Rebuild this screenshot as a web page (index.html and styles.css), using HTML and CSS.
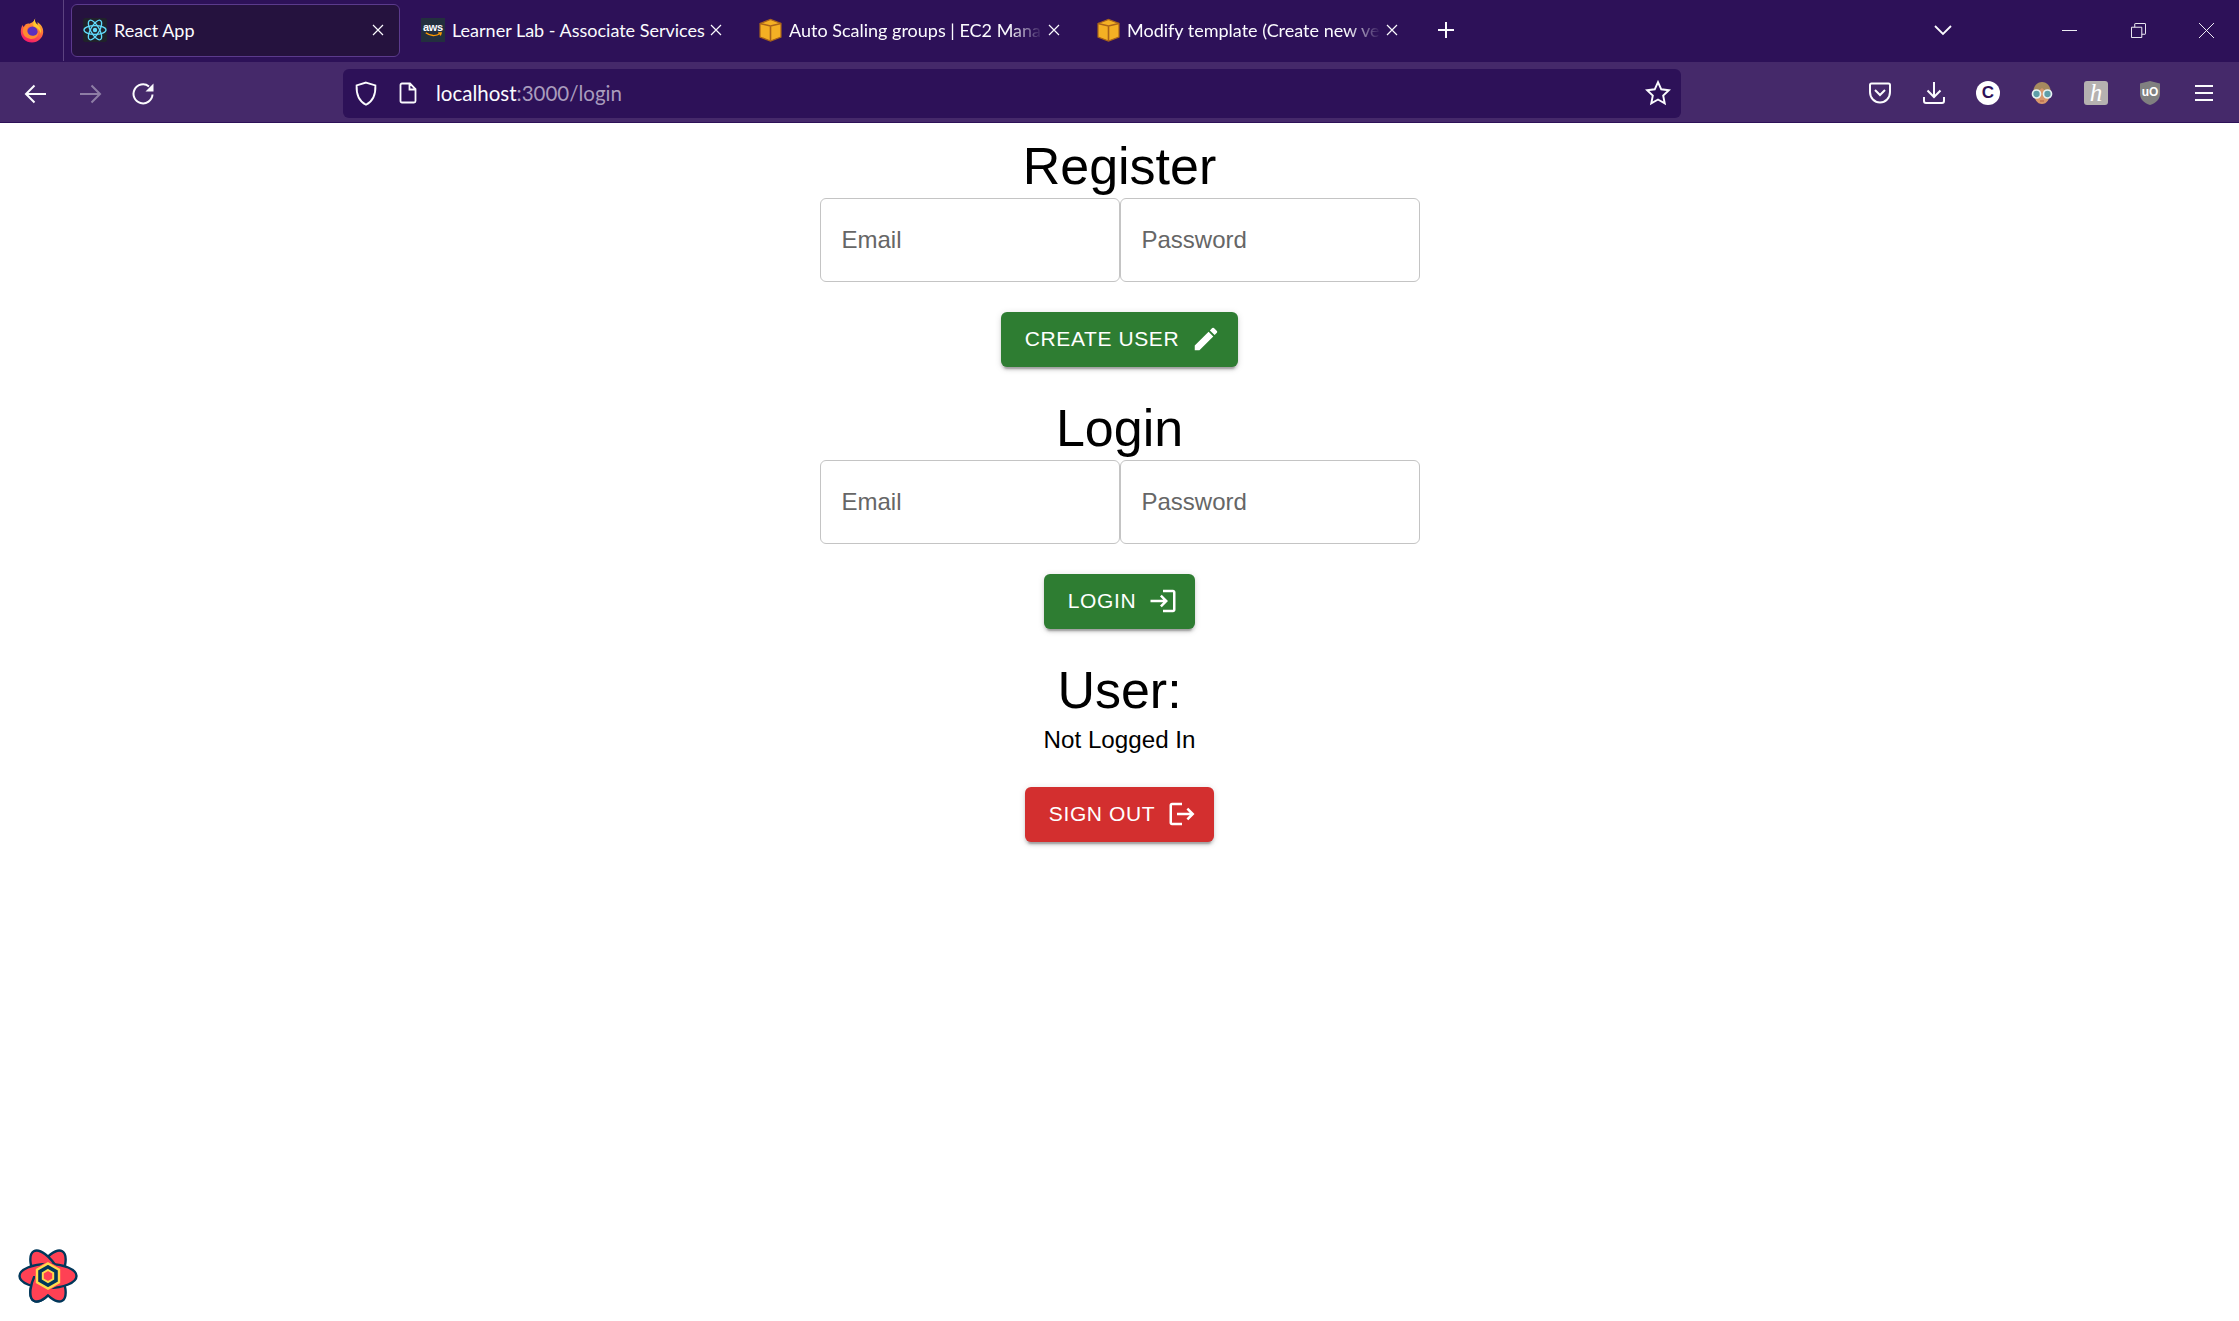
FILE: index.html
```html
<!DOCTYPE html>
<html lang="en">
  <head>
    <meta charset="UTF-8" />
    <title>React App</title>
    <link rel="stylesheet" href="styles.css">
  </head>
  <body>
    <header class="chrome">
      <div class="tabbar">
        <div class="ff-slot">
          <svg class="ff-logo" viewBox="0 0 30 30">
            <defs>
              <linearGradient id="ffBody" x1="0.75" y1="0" x2="0.3" y2="1">
                <stop offset="0" stop-color="#ffd02e" />
                <stop offset="0.45" stop-color="#ff7139" />
                <stop offset="1" stop-color="#f5156c" />
              </linearGradient>
            </defs>
            <path fill="url(#ffBody)" d="M19 0c-1.500 4 .5 6 3 8 0-1 .2-2-.3-3.500C26 7.500 29.500 11.500 29 17.500 28.400 24.500 22.500 30 15 30 7 30 1 24 1 16.500c0-3.500.8-6.500 2.500-8.500 0 1.200.5 2 1.200 2.500C6 7.500 9 6 11.500 6.500 14.500 5.500 18 4 19 0z" />
            <path fill="#ffc92e" d="M19 0c-1 4 1 6 4 9 3 3 4 6 3 10-1-5-5-8-9-9-1-4 0-7 2-10z" />
            <circle cx="15.500" cy="16.500" r="6.500" fill="#5b2fbf" />
            <path fill="#ff8a30" d="M5 11c2-2.500 5.500-3.500 9-3-3.500 1-5.500 4-5 7.500.5 4 4 6.500 8 6 3-.4 5-2.500 6-5 .5 5.500-4 9.500-9.500 9C7.500 25 3.500 21 3.500 16c0-2 .5-3.500 1.500-5z" />
          </svg>
        </div>
        <div class="tab tab-active">
          <svg class="favicon" viewBox="0 0 24 24">
            <rect width="24" height="24" rx="2" fill="#20232a" />
            <g fill="none" stroke="#61dafb" stroke-width="1.300">
              <ellipse cx="12" cy="12" rx="11" ry="4.300" />
              <ellipse cx="12" cy="12" rx="11" ry="4.300" transform="rotate(60 12 12)" />
              <ellipse cx="12" cy="12" rx="11" ry="4.300" transform="rotate(120 12 12)" />
            </g>
            <circle cx="12" cy="12" r="2.200" fill="#61dafb" />
          </svg>
          <span class="tab-title">React App</span>
          <svg class="tab-close" viewBox="0 0 12 12"><path d="M1 1l10 10M11 1L1 11" /></svg>
        </div>
        <div class="tab">
          <div class="favicon aws-icon">
            <span class="aws-text">aws</span>
            <svg class="aws-smile" viewBox="0 0 20 7"><path d="M1 1c5 4 12 4 17 .8M15.500 1H19l-1 3" /></svg>
          </div>
          <span class="tab-title">Learner Lab - Associate Services</span>
          <svg class="tab-close" viewBox="0 0 12 12"><path d="M1 1l10 10M11 1L1 11" /></svg>
        </div>
        <div class="tab">
          <svg class="favicon favicon-cube" viewBox="0 0 24 24">
            <path fill="#f4b024" stroke="#a9641a" stroke-width="1.200" d="M1 5.500L11.500 1.500 22 5.500v13.500L11.500 23 1 19z" />
            <path fill="none" stroke="#a9641a" stroke-width="1.600" d="M1 5.500L11.500 8 22 5.500M11.500 8v15" />
          </svg>
          <span class="tab-title tab-fade">Auto Scaling groups | EC2 Management Console</span>
          <svg class="tab-close" viewBox="0 0 12 12"><path d="M1 1l10 10M11 1L1 11" /></svg>
        </div>
        <div class="tab">
          <svg class="favicon favicon-cube" viewBox="0 0 24 24">
            <path fill="#f4b024" stroke="#a9641a" stroke-width="1.200" d="M1 5.500L11.500 1.500 22 5.500v13.500L11.500 23 1 19z" />
            <path fill="none" stroke="#a9641a" stroke-width="1.600" d="M1 5.500L11.500 8 22 5.500M11.500 8v15" />
          </svg>
          <span class="tab-title tab-fade">Modify template (Create new version)</span>
          <svg class="tab-close" viewBox="0 0 12 12"><path d="M1 1l10 10M11 1L1 11" /></svg>
        </div>
        <svg class="new-tab" viewBox="0 0 18 18"><path d="M9 1v16M1 9h16" /></svg>
        <div class="tabbar-right">
          <svg class="all-tabs" viewBox="0 0 18 11"><path d="M1 1l8 8 8-8" /></svg>
          <div class="win-btn">
            <svg viewBox="0 0 16 16" class="win-icon"><path d="M0 8h16" /></svg>
          </div>
          <div class="win-btn">
            <svg viewBox="0 0 16 16" class="win-icon"><path d="M.5 4.500h11v11H.5zM4 4.500V1c0-.3.2-.5.5-.5h10.500c.3 0 .5.2.5.5v10.500c0 .3-.2.5-.5.5H11.500" /></svg>
          </div>
          <div class="win-btn win-close">
            <svg viewBox="0 0 16 16" class="win-icon"><path d="M0 0l16 16M16 0L0 16" /></svg>
          </div>
        </div>
      </div>
      <div class="toolbar">
        <div class="nav-group">
          <div class="tool-btn">
            <svg class="tool-icon" viewBox="0 0 24 24"><path d="M22 12H2M10.500 3.500L2 12l8.500 8.500" /></svg>
          </div>
          <div class="tool-btn tool-off">
            <svg class="tool-icon" viewBox="0 0 24 24"><path d="M2 12h20M13.500 3.500L22 12l-8.500 8.500" /></svg>
          </div>
          <div class="tool-btn">
            <svg class="tool-icon" viewBox="0 0 24 24"><path d="M20.500 12.500A9.500 9.500 0 1 1 17 4.500" /><path class="solid" d="M21.500 1.500v8h-8z" /></svg>
          </div>
        </div>
        <div class="urlbar">
          <svg class="url-icon shield" viewBox="0 0 22 24"><path d="M11 1.500l9 2.800c.4 9-2 15-9 18.500C4 19.300 1.600 13.300 2 4.300z" /></svg>
          <svg class="url-icon doc" viewBox="0 0 18 22"><path d="M2 1.500h8.500L16 7v12c0 .8-.7 1.500-1.500 1.500h-12c-.8 0-1.500-.7-1.500-1.500V3c0-.8.700-1.500 1.500-1.500zM10 1.500V7.500h6" /></svg>
          <span class="url-text">localhost<span class="url-dim">:3000/login</span></span>
          <svg class="url-icon star" viewBox="0 0 24 24"><path d="M12 2l3 6.600 7 .9-5.200 4.900 1.400 7.100L12 18l-6.200 3.500 1.400-7.100L2 9.500l7-.9z" /></svg>
        </div>
        <div class="ext-group">
          <div class="tool-btn">
            <svg class="tool-icon" viewBox="0 0 24 24"><path d="M3.500 2.500h17c1 0 1.500.6 1.500 1.500v7c0 6-4.500 10.500-10 10.500S2 17 2 11V4c0-.9.500-1.500 1.500-1.500z" /><path d="M7 9l5 5 5-5" /></svg>
          </div>
          <div class="tool-btn">
            <svg class="tool-icon" viewBox="0 0 24 24"><path d="M12 1v15M5.500 9.500L12 16l6.500-6.500M2 16v4c0 1 .6 2 2 2h16c1.400 0 2-1 2-2v-4" /></svg>
          </div>
          <div class="tool-btn">
            <div class="ext-c">C</div>
          </div>
          <div class="tool-btn">
            <svg class="ext-svg" viewBox="0 0 24 24">
              <path fill="#a68a5f" d="M3 13C3 5 7 1 12 1s9 4 9 12z" />
              <path fill="#d8976b" d="M4 12c3-1 6-3 8-5 2 2 5 4 8 5 0 6-3 11-8 11s-8-5-8-11z" />
              <circle cx="6.500" cy="13" r="4" fill="#5d9ea8" stroke="#e6f2f2" stroke-width="1.700" />
              <circle cx="17.500" cy="13" r="4" fill="#5d9ea8" stroke="#e6f2f2" stroke-width="1.700" />
              <path fill="none" stroke="#b8674a" stroke-width="1.200" d="M10 20h4" />
            </svg>
          </div>
          <div class="tool-btn">
            <div class="ext-h">h</div>
          </div>
          <div class="tool-btn">
            <div class="ext-shield">
              <svg class="ext-svg" viewBox="0 0 24 24"><path fill="#808080" d="M12 0l10 2.500V13c0 5-4 9-10 11C6 22 2 18 2 13V2.500z" /></svg>
              <span class="ext-uo">uO</span>
            </div>
          </div>
          <div class="tool-btn">
            <svg class="tool-icon" viewBox="0 0 24 24"><path d="M3 5h18M3 12h18M3 19h18" /></svg>
          </div>
        </div>
      </div>
    </header>

    <main class="page">
      <h1 class="title">Register</h1>
      <div class="fields">
        <input class="field" type="text" placeholder="Email" />
        <input class="field" type="password" placeholder="Password" />
      </div>
      <button class="btn btn-green">
        CREATE USER
        <svg class="btn-icon" viewBox="0 0 24 24"><path d="M3 17.250V21h3.750L17.810 9.940l-3.750-3.750L3 17.250zM20.710 7.040c.39-.39.39-1.020 0-1.410l-2.340-2.340a.9959.9959 0 0 0-1.410 0l-1.830 1.830 3.750 3.750 1.830-1.830z" /></svg>
      </button>

      <h1 class="title">Login</h1>
      <div class="fields">
        <input class="field" type="text" placeholder="Email" />
        <input class="field" type="password" placeholder="Password" />
      </div>
      <button class="btn btn-green btn-login">
        LOGIN
        <svg class="btn-icon" viewBox="0 0 24 24"><path d="M11 7 9.600 8.400l2.600 2.600H2v2h10.200l-2.600 2.600L11 17l5-5-5-5zm9 12h-8v2h8c1.100 0 2-.9 2-2V5c0-1.100-.9-2-2-2h-8v2h8v14z" /></svg>
      </button>

      <h1 class="title">User:</h1>
      <p class="status">Not Logged In</p>
      <button class="btn btn-red">
        SIGN OUT
        <svg class="btn-icon" viewBox="0 0 24 24"><path d="m17 7-1.410 1.410L18.170 11H8v2h10.170l-2.580 2.580L17 17l5-5zM4 5h8V3H4c-1.100 0-2 .9-2 2v14c0 1.100.9 2 2 2h8v-2H4V5z" /></svg>
      </button>
    </main>

    <svg class="devtools-logo" viewBox="0 0 60 56">
      <defs>
        <clipPath id="weave"><rect x="0" y="28" width="30" height="28" /></clipPath>
      </defs>
      <g fill="#ff4154" stroke="#00375a" stroke-width="2.400">
        <ellipse cx="30" cy="28" rx="28.500" ry="12" transform="rotate(120 30 28)" />
        <ellipse cx="30" cy="28" rx="28.500" ry="12" transform="rotate(60 30 28)" />
        <ellipse cx="30" cy="28" rx="28.500" ry="12" />
        <g clip-path="url(#weave)">
          <ellipse cx="30" cy="28" rx="28.500" ry="12" transform="rotate(120 30 28)" />
        </g>
      </g>
      <path fill="#ff4154" d="M30 13l13 7.500v15L30 43l-13-7.500v-15z" />
      <path fill="#00375a" stroke="#ffd94c" stroke-width="2.400" d="M30 15.500l11 6.300v12.400l-11 6.300-11-6.300V21.800z" />
      <path fill="#ff4154" stroke="#ffd94c" stroke-width="2" d="M30 22l5.200 3v6L30 34l-5.200-3v-6z" />
    </svg>
  </body>
</html>
```
FILE: styles.css
```css
* {
  box-sizing: border-box;
}
html,
body {
  margin: 0;
  height: 100%;
  background: #fff;
}
body {
  font-family: "Liberation Sans", Arial, sans-serif;
  overflow: hidden;
}

/* browser frame */
.chrome {
  color: #fbfbfe;
  font-family: Lato, "Noto Sans", sans-serif;
}
.tabbar {
  display: flex;
  align-items: center;
  height: 62px;
  padding-bottom: 2px;
  background: #2d1158;
}
.ff-slot {
  display: flex;
  align-items: center;
  justify-content: center;
  width: 64px;
  height: 62px;
  flex-shrink: 0;
  border-right: 1px solid #5c4380;
  margin-right: 7px;
}
.ff-logo {
  width: 24px;
  height: 25px;
}
.tab {
  display: flex;
  align-items: center;
  width: 329px;
  height: 53px;
  margin-right: 9px;
  padding: 0 15px 0 11px;
  flex-shrink: 0;
  border: 1px solid transparent;
  border-radius: 6px;
  font-size: 18px;
}
.tab-active {
  background: #25123e;
  border-color: #5b3a8c;
}
.favicon {
  width: 24px;
  height: 24px;
  margin-right: 7px;
  flex-shrink: 0;
}
.favicon-cube {
  margin-right: 6px;
}
.aws-icon {
  display: flex;
  flex-direction: column;
  align-items: center;
  justify-content: center;
  background: #232f3e;
}
.aws-text {
  font-family: "Liberation Sans", sans-serif;
  font-size: 11px;
  font-weight: bold;
  line-height: 10px;
  letter-spacing: -0.3px;
}
.aws-smile {
  width: 19px;
  height: 6px;
  fill: none;
  stroke: #f90;
  stroke-width: 1.500;
}
.tab-title {
  flex: 1;
  min-width: 0;
  white-space: nowrap;
  overflow: hidden;
}
.tab-fade {
  -webkit-mask-image: linear-gradient(to right, #000 86%, transparent 99%);
  mask-image: linear-gradient(to right, #000 86%, transparent 99%);
}
.tab-close {
  width: 12px;
  height: 12px;
  margin-left: 3px;
  flex-shrink: 0;
  fill: none;
  stroke: #fbfbfe;
  stroke-width: 1.200;
}
.new-tab {
  width: 18px;
  height: 18px;
  margin-left: 14px;
  fill: none;
  stroke: #fbfbfe;
  stroke-width: 2;
}
.tabbar-right {
  display: flex;
  align-items: center;
  height: 100%;
  margin-left: auto;
}
.all-tabs {
  width: 18px;
  height: 11px;
  margin-right: 83px;
  fill: none;
  stroke: #fbfbfe;
  stroke-width: 1.800;
}
.win-btn {
  display: flex;
  align-items: center;
  justify-content: center;
  width: 69px;
  height: 100%;
}
.win-close {
  width: 66px;
}
.win-icon {
  width: 15px;
  height: 15px;
  fill: none;
  stroke: #fbfbfe;
  stroke-width: 1;
}
.toolbar {
  display: flex;
  align-items: center;
  height: 61px;
  padding: 2px 8px 0 9px;
  background: #45296a;
  border-bottom: 1px solid #2d1158;
}
.nav-group,
.ext-group {
  display: flex;
  align-items: center;
  flex-shrink: 0;
}
.nav-group {
  margin-right: 172px;
  padding-top: 2px;
}
.ext-group {
  margin-left: auto;
}
.tool-btn {
  display: flex;
  align-items: center;
  justify-content: center;
  width: 54px;
  height: 48px;
}
.tool-off {
  opacity: 0.4;
}
.tool-icon {
  width: 24px;
  height: 24px;
  fill: none;
  stroke: #fbfbfe;
  stroke-width: 2;
}
.tool-icon .solid {
  fill: #fbfbfe;
  stroke: none;
}
.urlbar {
  display: flex;
  align-items: center;
  width: 1338px;
  height: 49px;
  padding: 0 10px 0 11px;
  background: #2d1158;
  border-radius: 6px;
  flex-shrink: 0;
}
.url-icon {
  fill: none;
  stroke: #fbfbfe;
  stroke-width: 1.800;
  flex-shrink: 0;
}
.shield {
  width: 24px;
  height: 25px;
  margin-right: 21px;
}
.doc {
  width: 19px;
  height: 22px;
  margin-right: 18px;
}
.url-text {
  flex: 1;
  font-size: 20.500px;
}
.url-dim {
  color: #a99cbd;
}
.star {
  width: 26px;
  height: 26px;
}
.ext-c {
  display: flex;
  align-items: center;
  justify-content: center;
  width: 24px;
  height: 24px;
  border-radius: 50%;
  background: #fff;
  color: #2d1158;
  font-family: "Liberation Sans", sans-serif;
  font-size: 17px;
  font-weight: bold;
}
.ext-svg {
  display: block;
  width: 24px;
  height: 24px;
}
.ext-h {
  display: flex;
  align-items: center;
  justify-content: center;
  width: 24px;
  height: 24px;
  border-radius: 3px;
  background: #b5b1b0;
  color: #fff;
  font-family: "Liberation Serif", serif;
  font-size: 25px;
  font-style: italic;
}
.ext-shield {
  position: relative;
  width: 24px;
  height: 24px;
}
.ext-uo {
  position: absolute;
  top: 4px;
  left: 0;
  right: 0;
  color: #fff;
  font-family: "Liberation Sans", sans-serif;
  font-size: 12px;
  font-weight: bold;
  text-align: center;
}

/* page content */
.page {
  display: flex;
  flex-direction: column;
  align-items: center;
  padding-top: 13px;
}
.title {
  margin: 0 0 2px;
  font-size: 52px;
  font-weight: normal;
  line-height: 60px;
  color: #000;
}
.fields {
  display: flex;
}
.field {
  width: 300px;
  height: 84px;
  padding: 0 21px;
  border: 1.500px solid #c4c4c4;
  border-radius: 6px;
  outline: none;
  font-family: "Liberation Sans", sans-serif;
  font-size: 24px;
  color: #222;
}
.field::placeholder {
  color: #666;
  opacity: 1;
}
.status {
  margin: 4px 0 0;
  font-size: 24.200px;
  line-height: 27px;
  color: #000;
}
.btn {
  display: inline-flex;
  align-items: center;
  height: 55px;
  margin: 29.500px 0 31.500px;
  padding: 0 17px 1px 24px;
  border: none;
  border-radius: 6px;
  font-family: "Liberation Sans", sans-serif;
  font-size: 21px;
  letter-spacing: 0.6px;
  color: #fff;
  box-shadow: 0 4.500px 1.500px -3px rgba(0, 0, 0, 0.2), 0 3px 3px 0 rgba(0, 0, 0, 0.14), 0 1.500px 7.500px 0 rgba(0, 0, 0, 0.12);
}
.btn-green {
  background: #2e7d32;
}
.btn-login {
  margin-bottom: 31px;
}
.btn-red {
  background: #d32f2f;
  margin-top: 34px;
}
.btn-icon {
  width: 30px;
  height: 30px;
  margin-left: 12px;
  fill: #fff;
}

/* floating devtools button */
.devtools-logo {
  position: fixed;
  left: 18px;
  bottom: 17px;
  width: 60px;
  height: 56px;
}
```
